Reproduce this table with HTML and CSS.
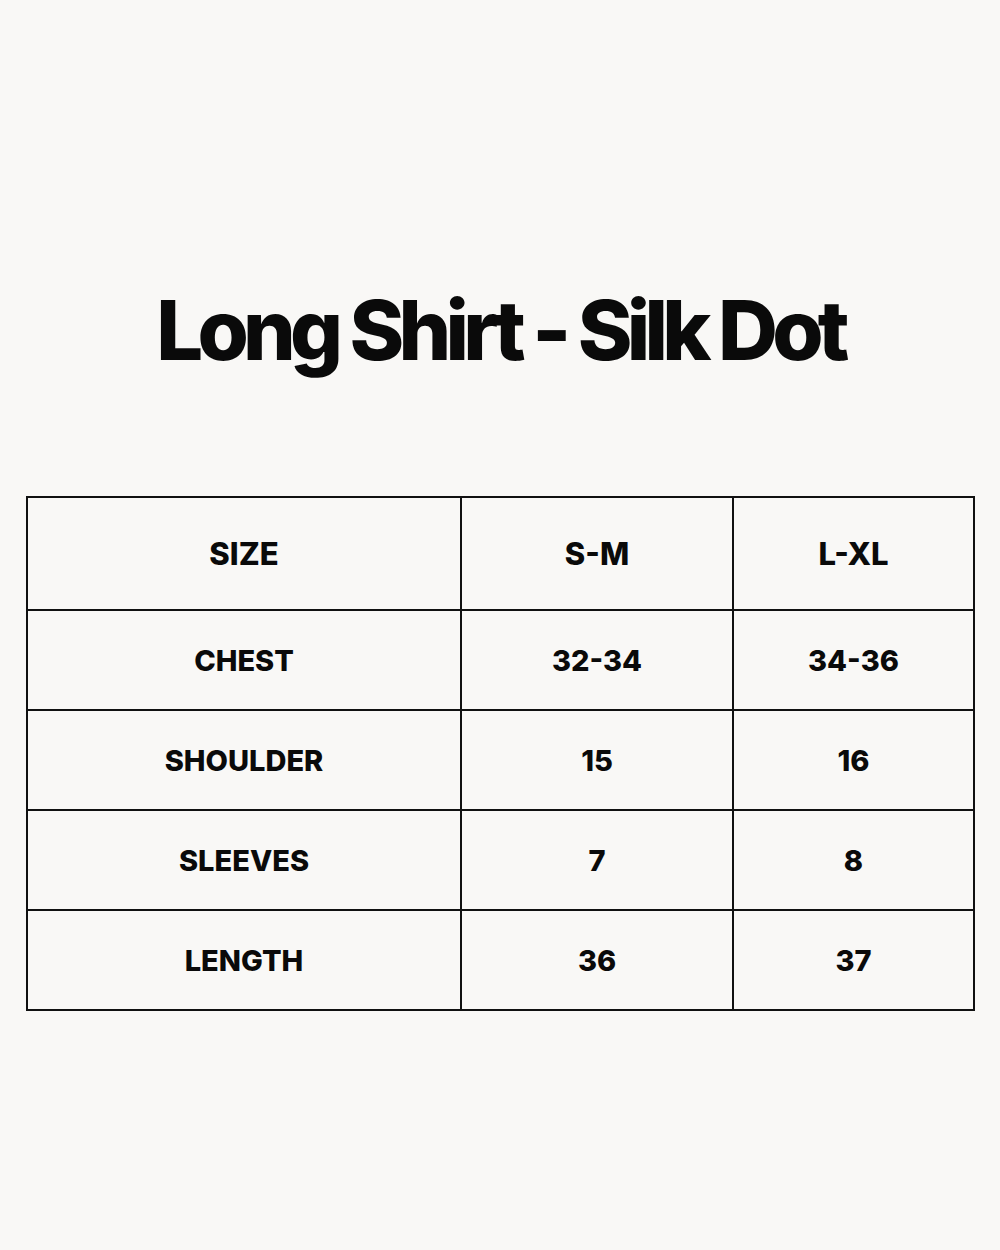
FILE: index.html
```html
<!DOCTYPE html>
<html>
<head>
<meta charset="utf-8">
<link rel="stylesheet" href="styles.css">
</head>
<body>
<main class="page">
  <h1 class="title">Long Shirt - Silk Dot</h1>
  <table class="chart">
    <colgroup>
      <col class="c1"><col class="c2"><col class="c3">
    </colgroup>
    <tr class="head"><td>SIZE</td><td>S-M</td><td>L-XL</td></tr>
    <tr><td>CHEST</td><td>32-34</td><td>34-36</td></tr>
    <tr><td>SHOULDER</td><td>15</td><td>16</td></tr>
    <tr><td>SLEEVES</td><td>7</td><td>8</td></tr>
    <tr><td>LENGTH</td><td>36</td><td>37</td></tr>
  </table>
</main>
</body>
</html>
```

FILE: styles.css
```css
html, body {
  margin: 0;
  padding: 0;
  background: #f9f8f6;
}
.page {
  width: 1000px;
  height: 1250px;
  box-sizing: border-box;
  padding: 270px 26px 0 26px;
  font-family: Inter, "Noto Sans", sans-serif;
  color: #0a0a0a;
}
.title {
  margin: 0;
  text-align: center;
  font-size: 83px;
  font-weight: 800;
  letter-spacing: -5.8px;
  line-height: 120px;
}
.chart {
  margin-top: 106px;
  width: 947px;
  border-collapse: collapse;
  table-layout: fixed;
}
.c1 { width: 434px; }
.c2 { width: 272px; }
.c3 { width: 241px; }
.chart td {
  border: 2px solid #111;
  text-align: center;
  vertical-align: middle;
  font-size: 29px;
  font-weight: 800;
  letter-spacing: 0;
  height: 98px;
  padding: 0;
}
.chart .head td {
  height: 111px;
  font-size: 31px;
}
```
